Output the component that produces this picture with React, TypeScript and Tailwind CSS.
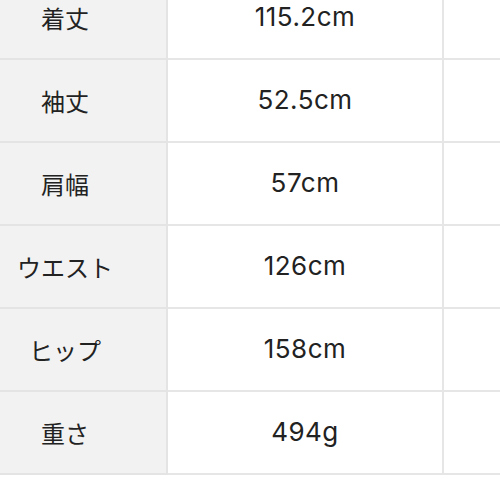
const rows = [
  { label: '着丈', value: '115.2cm' },
  { label: '袖丈', value: '52.5cm' },
  { label: '肩幅', value: '57cm' },
  { label: 'ウエスト', value: '126cm' },
  { label: 'ヒップ', value: '158cm' },
  { label: '重さ', value: '494g' },
]

export default function App() {
  return (
    <div
      className="w-[500px] h-[500px] overflow-hidden bg-white text-[#222]"
      style={{ fontFamily: '"Noto Sans CJK JP", "Noto Sans", sans-serif' }}
    >
      <div className="-mt-[23px]">
        {rows.map((r) => (
          <div key={r.label} className="grid grid-cols-[168px_276px_1fr] h-[83px]">
            <div className="flex items-center justify-center pr-[36px] bg-[#f2f2f2] border-b-2 border-r-2 border-[#e4e4e4] text-[24px]">
              {r.label}
            </div>
            <div className="flex items-center justify-center pb-[3px] border-b-2 border-r-2 border-[#e6e6e6] text-[26px] tracking-[0.5px] font-['Inter',sans-serif]">
              {r.value}
            </div>
            <div className="border-b-2 border-[#e6e6e6]" />
          </div>
        ))}
      </div>
    </div>
  )
}
